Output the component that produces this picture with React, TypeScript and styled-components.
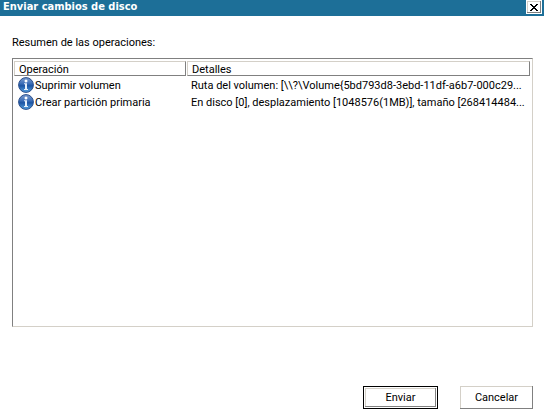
import React from "react";
import styled, { createGlobalStyle } from "styled-components";

const GlobalStyle = createGlobalStyle`
  * { box-sizing: border-box; }
  body {
    margin: 0;
    background: #fff;
    color: #000;
    font-family: Roboto, sans-serif;
    font-size: 11px;
    line-height: 16px;
  }
`;

const Dialog = styled.main`
  display: flex;
  flex-direction: column;
  min-height: 100vh;
`;

const TitleBar = styled.header`
  display: flex;
  align-items: flex-start;
  justify-content: space-between;
  height: 16px;
  padding: 0 2px 0 3px;
  background: #1d6f98;
  color: #fff;
`;

const Title = styled.h1`
  margin: 0;
  font-family: "DejaVu Sans Condensed", "Noto Sans", sans-serif;
  font-size: 11px;
  line-height: 14px;
  font-weight: 700;
  white-space: nowrap;
`;

const CloseButton = styled.button`
  display: flex;
  align-items: center;
  justify-content: center;
  width: 16px;
  height: 14px;
  padding: 0;
  border: 1px solid #fff;
  background: #fff;
  box-shadow: inset -1px -1px #808080, inset 1px 1px #d4d0c8;
`;

const Content = styled.section`
  display: flex;
  flex: 1;
  flex-direction: column;
  padding: 19px 11px 6px 12px;
`;

const Summary = styled.h2`
  margin: 0 0 7px;
  font-size: 11px;
  line-height: 16px;
  font-weight: 400;
`;

const ListBox = styled.div`
  flex: 1;
  padding: 2px 1px 1px;
  border: 1px solid;
  border-color: #808080 #d4d0c8 #d4d0c8 #808080;
  overflow: hidden;
`;

const Table = styled.table`
  width: 100%;
  border-collapse: collapse;
  table-layout: fixed;
`;

const HeadCell = styled.th<{ $width?: number }>`
  width: ${(p) => (p.$width ? `${p.$width}px` : "auto")};
  padding: 0 1px 1px 0;
  font-weight: 400;
  text-align: left;
`;

const HeadLabel = styled.div`
  height: 15px;
  padding: 0 4px;
  border: 1px solid;
  border-color: #d4d0c8 #808080 #808080 #d4d0c8;
`;

const Cell = styled.td`
  height: 17px;
  padding: 0 0 0 4px;
  vertical-align: top;
  white-space: nowrap;
  overflow: hidden;
`;

const Operation = styled.div`
  display: flex;
  align-items: flex-start;
  gap: 1px;
`;

const CellText = styled.div`
  padding-top: 1px;
`;

const Footer = styled.footer`
  display: flex;
  justify-content: flex-end;
  gap: 22px;
  margin-top: 59px;
`;

const Button = styled.button<{ $primary?: boolean }>`
  width: ${(p) => (p.$primary ? 75 : 73)}px;
  height: 23px;
  padding: 0;
  border: ${(p) => (p.$primary ? "1px solid #000" : "0")};
  background: #fff;
  box-shadow: ${(p) =>
    p.$primary
      ? "inset -1px -1px #fff, inset 1px 1px #fff, inset -2px -2px #808080, inset 2px 2px #d4d0c8"
      : "inset -1px -1px #808080, inset 1px 1px #d4d0c8"};
  color: #000;
  font: inherit;
`;

function InfoIcon() {
  return (
    <svg width="16" height="16" viewBox="0 0 16 16" aria-hidden="true">
      <defs>
        <linearGradient id="ball" x1="0" y1="0" x2="0" y2="1">
          <stop offset="0" stopColor="#7f9fd0" />
          <stop offset="0.4" stopColor="#3d6fb8" />
          <stop offset="0.55" stopColor="#1c55a4" />
          <stop offset="1" stopColor="#58a4e2" />
        </linearGradient>
      </defs>
      <circle cx="8" cy="8" r="7.4" fill="url(#ball)" stroke="#2b4f8c" strokeWidth="1" />
      <circle cx="8" cy="3.9" r="1.5" fill="#fff" />
      <path d="M6 6.3h3v5.7h1v1H6v-1h1V7.3H6z" fill="#e6f0fb" />
    </svg>
  );
}

const operations = [
  { name: "Suprimir volumen", details: "Ruta del volumen: [\\\\?\\Volume{5bd793d8-3ebd-11df-a6b7-000c29..." },
  { name: "Crear partición primaria", details: "En disco [0], desplazamiento [1048576(1MB)], tamaño [268414484..." },
];

export default function App() {
  return (
    <>
      <GlobalStyle />
      <Dialog>
        <TitleBar>
          <Title>Enviar cambios de disco</Title>
          <CloseButton type="button" aria-label="Cerrar">
            <svg width="8" height="7" viewBox="0 0 8 7" shapeRendering="crispEdges" aria-hidden="true">
              <path
                d="M0 0h2v1h1v1h2V1h1V0h2v1H7v1H6v1H5v1h1v1h1v1h1v1H6V6H5V5H3v1H2v1H0V6h1V5h1V4h1V3H2V2H1V1H0z"
                fill="#000"
              />
            </svg>
          </CloseButton>
        </TitleBar>
        <Content>
          <Summary id="summary">Resumen de las operaciones:</Summary>
          <ListBox>
            <Table aria-labelledby="summary">
              <thead>
                <tr>
                  <HeadCell $width={173}><HeadLabel>Operación</HeadLabel></HeadCell>
                  <HeadCell><HeadLabel>Detalles</HeadLabel></HeadCell>
                </tr>
              </thead>
              <tbody>
                {operations.map((op) => (
                  <tr key={op.name}>
                    <Cell>
                      <Operation>
                        <InfoIcon />
                        <CellText>{op.name}</CellText>
                      </Operation>
                    </Cell>
                    <Cell>
                      <CellText>{op.details}</CellText>
                    </Cell>
                  </tr>
                ))}
              </tbody>
            </Table>
          </ListBox>
          <Footer>
            <Button type="button" $primary>Enviar</Button>
            <Button type="button">Cancelar</Button>
          </Footer>
        </Content>
      </Dialog>
    </>
  );
}
